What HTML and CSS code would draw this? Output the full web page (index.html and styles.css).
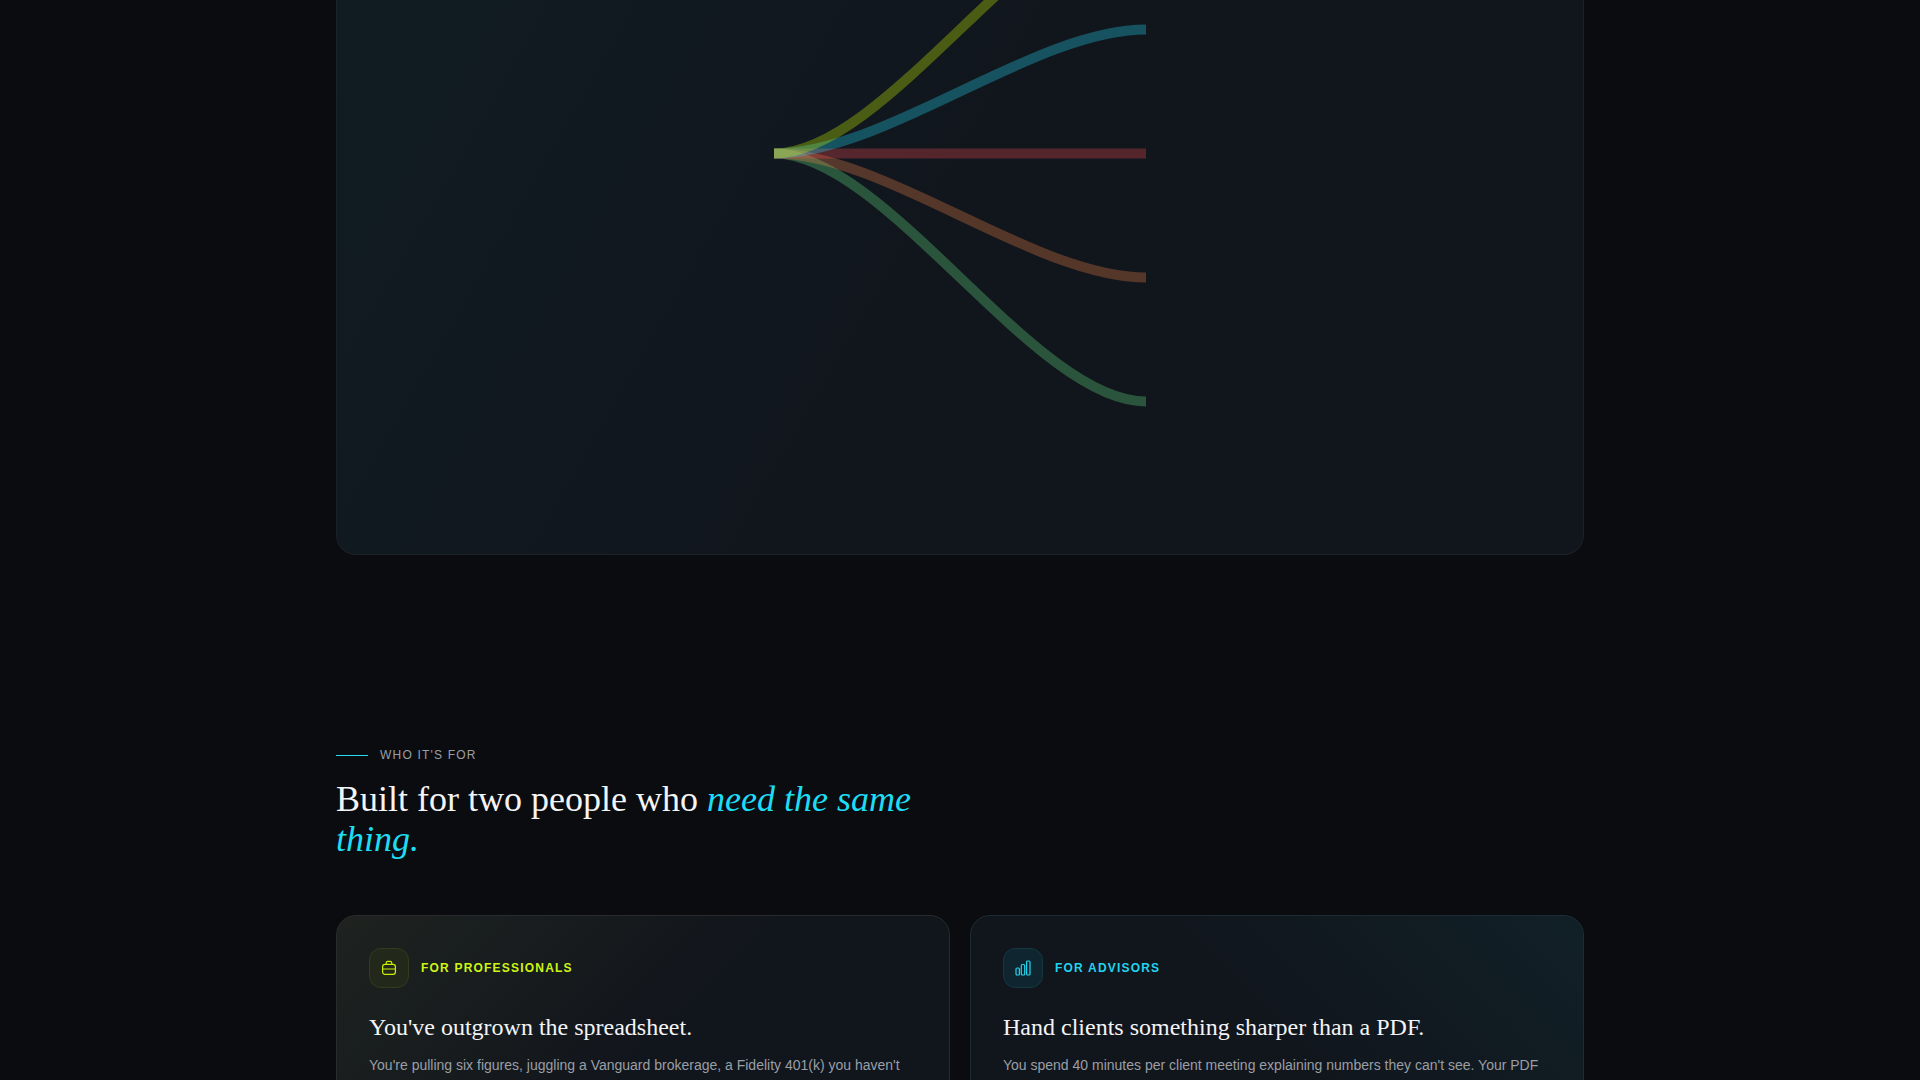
FILE: index.html

```html
<!DOCTYPE html>
<html lang="en">
<head>
  <meta charset="UTF-8">
  <meta name="viewport" content="width=device-width, initial-scale=1.0">
  <title>Who it's for</title>
  <link rel="stylesheet" href="styles.css">
</head>
<body>
  <main class="wrap">
    <section class="flow-panel">
      <svg class="flow" width="372" height="420" viewBox="774 0 372 420" fill="none" stroke-width="10">
        <path class="line-green" d="M774 153.5C886 153.5 1034 401.5 1146 401.5"/>
        <path class="line-orange" d="M774 153.5C886 153.5 1034 277.5 1146 277.5"/>
        <path class="line-red" d="M774 153.5H1146"/>
        <path class="line-cyan" d="M774 153.5C886 153.5 1034 29.5 1146 29.5"/>
        <path class="line-lime" d="M774 153.5C886 153.5 1034 -94.5 1146 -94.5"/>
      </svg>
    </section>

    <section class="audience">
      <div class="eyebrow"><span class="eyebrow-rule"></span>WHO IT'S FOR</div>
      <h2 class="headline">Built for two people who <em>need the same thing.</em></h2>
      <div class="cards">
        <article class="card card-pro">
          <div class="card-head">
            <span class="card-icon">
              <svg width="16" height="16" viewBox="0 0 16 16" fill="none" stroke="currentColor" stroke-width="1.2" stroke-linecap="round" stroke-linejoin="round">
                <rect x="1.6" y="4.4" width="12.8" height="10" rx="2.4"/>
                <path d="M5.2 4.4V3a1.6 1.6 0 0 1 1.6-1.6h2.4A1.6 1.6 0 0 1 10.8 3v1.4"/>
                <path d="M1.6 9h12.8"/>
              </svg>
            </span>
            <span class="card-tag">FOR PROFESSIONALS</span>
          </div>
          <h3 class="card-title">You've outgrown the spreadsheet.</h3>
          <p class="card-text">You're pulling six figures, juggling a Vanguard brokerage, a Fidelity 401(k) you haven't</p>
        </article>
        <article class="card card-adv">
          <div class="card-head">
            <span class="card-icon">
              <svg width="16" height="16" viewBox="0 0 16 16" fill="none" stroke="currentColor" stroke-width="1.2" stroke-linejoin="round">
                <rect x="1" y="8" width="3.4" height="7" rx="1"/>
                <rect x="6.3" y="4.5" width="3.4" height="10.5" rx="1"/>
                <rect x="11.6" y="1" width="3.4" height="14" rx="1"/>
              </svg>
            </span>
            <span class="card-tag">FOR ADVISORS</span>
          </div>
          <h3 class="card-title">Hand clients something sharper than a PDF.</h3>
          <p class="card-text">You spend 40 minutes per client meeting explaining numbers they can't see. Your PDF</p>
        </article>
      </div>
    </section>
  </main>
</body>
</html>
```

FILE: styles.css

```css
html, body { margin: 0; height: 1080px; overflow: hidden; }
body { background: #0a0c10; color: #f3f4f6; font-family: 'Liberation Sans', Arial, sans-serif; }
.wrap { width: 1248px; margin: 0 auto; }

.flow-panel { height: 555px; box-sizing: border-box; display: flex; justify-content: center; overflow: hidden; background: linear-gradient(120deg, #101c22 0%, #11181f 30%, #11151c 55%); border: 1px solid #1b2229; border-top: none; border-radius: 0 0 20px 20px; }
.flow { flex: none; }
.flow path { stroke-opacity: .32; }
.line-lime { stroke: #c8f000; }
.line-cyan { stroke: #22d3ee; }
.line-red { stroke: #ff4d55; opacity: .9; }
.line-orange { stroke: #ff8a4d; opacity: .9; }
.line-green { stroke: #5fdc80; }

.audience { padding-top: 191px; }
.eyebrow { display: flex; align-items: center; gap: 12px; font-size: 12px; line-height: 18px; letter-spacing: .1em; color: #9a9fa6; }
.eyebrow-rule { width: 32px; height: 1px; background: #2adcf2; }
.headline { width: 640px; margin: 15px 0 0; font-family: 'Liberation Serif', 'Times New Roman', serif; font-size: 36px; font-weight: 400; line-height: 40px; color: #f3f4f6; }
.headline em { color: #1fdcf5; }

.cards { display: grid; grid-template-columns: 1fr 1fr; gap: 20px; margin-top: 56px; }
.card { min-height: 300px; box-sizing: border-box; padding: 32px; border-radius: 20px; border: 1px solid #1c2229; }
.card-pro { background: linear-gradient(135deg, #1e2320 0%, #11151c 50%); border-color: #282d2b; }
.card-adv { background: linear-gradient(225deg, #112027 0%, #11151c 50%); border-color: #1d2c33; }
.card-head { display: flex; align-items: center; gap: 12px; }
.card-icon { width: 40px; height: 40px; box-sizing: border-box; display: flex; align-items: center; justify-content: center; border-radius: 12px; border: 1px solid; }
.card-tag { font-size: 12px; font-weight: 700; letter-spacing: .1em; }
.card-pro .card-icon { color: #c8f000; background: #23291a; border-color: #343c1c; }
.card-pro .card-tag { color: #d0f514; }
.card-adv .card-icon { color: #22d3ee; background: #0f2630; border-color: #163640; }
.card-adv .card-tag { color: #22d3ee; }
.card-title { margin: 23px 0 0; font-family: 'Liberation Serif', 'Times New Roman', serif; font-size: 24px; font-weight: 400; line-height: 32px; color: #f3f4f6; }
.card-text { margin: 11px 0 0; font-size: 14px; line-height: 22px; color: #9a9fa6; }
```
